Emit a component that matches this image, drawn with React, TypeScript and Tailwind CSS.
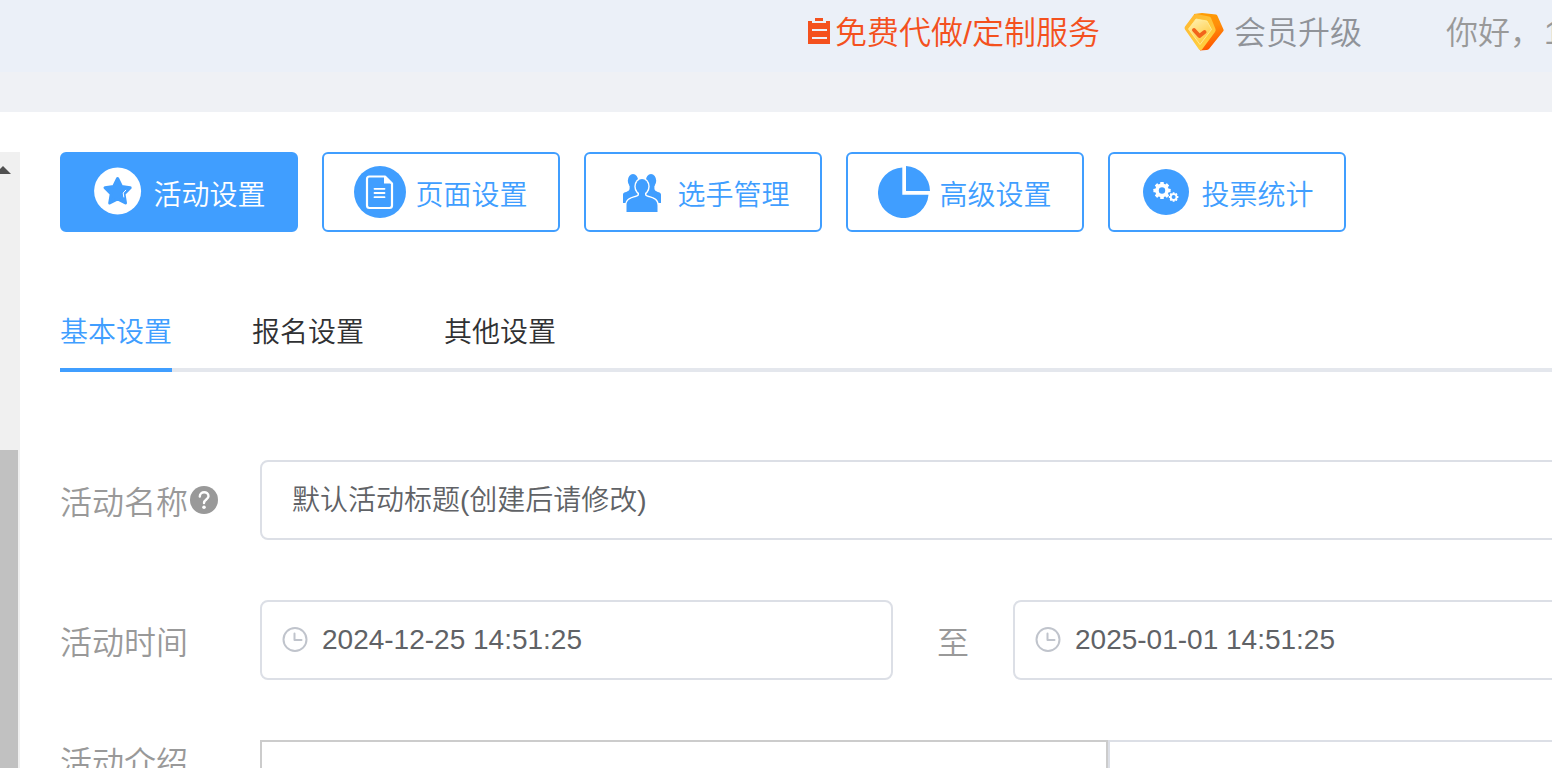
import type { ReactNode } from "react";

function ClipboardIcon() {
  return (
    <svg width="32" height="32" viewBox="0 0 32 32" fill="#f4511e" className="shrink-0">
      <path d="M5 5h4v2h14V5h4v23H5z" />
      <rect x="12" y="2" width="8" height="3" />
      <path d="M9 5h14v2H9zM9 13h15v2H9zM9 21h15v2H9z" fill="#ebf0f8" />
    </svg>
  );
}

function VipIcon() {
  return (
    <svg width="40" height="40" viewBox="0 0 40 40" className="relative -top-px shrink-0">
      <defs>
        <linearGradient id="vipSide" x1="0" y1="0" x2="0.3" y2="1">
          <stop offset="0" stopColor="#ffa000" />
          <stop offset="0.5" stopColor="#ff8f0a" />
          <stop offset="1" stopColor="#ff5a00" />
        </linearGradient>
        <linearGradient id="vipFace" x1="0" y1="0" x2="0.6" y2="1">
          <stop offset="0" stopColor="#ffb52e" />
          <stop offset="1" stopColor="#ffd040" />
        </linearGradient>
        <linearGradient id="vipInner" x1="0" y1="0" x2="0.5" y2="1">
          <stop offset="0" stopColor="#fff3b8" />
          <stop offset="1" stopColor="#ffc83a" />
        </linearGradient>
      </defs>
      <path d="M10 2 18 1 32 2.500Q33 2.700 33.500 4L39.500 17.500Q40 18.500 39 19.500L25 37Q24 38 22.500 38L16 38.500z" fill="url(#vipSide)" />
      <path d="M10 2.500Q11 1.700 12.500 2L25 4.500Q26.500 4.800 27 6L31.500 17Q32 18.500 31 20L18 37.500Q16.500 39 15 37.500L1 17.500Q0 16 1 14.500z" fill="url(#vipFace)" />
      <path d="M12 7 23 9 27.500 17.500 16 32.500 4.500 17z" fill="url(#vipInner)" stroke="#fff0a0" strokeWidth="0.8" strokeLinejoin="round" />
      <path d="M10 18 15.500 24 20.500 20" stroke="#f2641a" strokeWidth="4" strokeLinecap="round" strokeLinejoin="round" fill="none" />
    </svg>
  );
}

function StarIcon() {
  return (
    <svg width="52" height="52" viewBox="0 0 52 52">
      <circle cx="25.600" cy="25" r="23.500" fill="#fff" />
      <path
        d="M25.600 12.500 29.500 20.500 38.200 21.800 32 28 33.500 37 25.600 33 17.700 37 19.200 28 13 21.800 21.700 20.500z"
        fill="#409eff"
        stroke="#409eff"
        strokeWidth="3"
        strokeLinejoin="round"
      />
      <path d="M33.800 24.200 31.200 27 31.800 31" stroke="#fff" strokeWidth="1" strokeLinecap="round" fill="none" />
    </svg>
  );
}

function PageIcon() {
  return (
    <svg width="52" height="52" viewBox="0 0 52 52">
      <circle cx="26" cy="26" r="26" fill="#409eff" />
      <path
        d="M15.500 10.500H31L38 17.500V39.500Q38 42 35.500 42H15.500Q13 42 13 39.500V13Q13 10.500 15.500 10.500z"
        fill="none"
        stroke="#fff"
        strokeWidth="2.200"
        strokeLinejoin="round"
      />
      <path d="M30 10V17.500H38.500z" fill="#fff" />
      <path d="M20.500 22.800H30.500M20.500 27H30.500M20.500 31.200H30.500" stroke="#fff" strokeWidth="1.800" strokeLinecap="round" />
    </svg>
  );
}

function PeopleIcon() {
  return (
    <svg width="52" height="52" viewBox="0 0 52 52" fill="#409eff">
      {/* two people behind */}
      <ellipse cx="17" cy="14.800" rx="5.200" ry="6.800" />
      <path d="M13.600 19H22V37H7V28.500C7 25.500 13.600 26.500 13.600 22.500z" />
      <ellipse cx="35" cy="14.800" rx="5.200" ry="6.800" />
      <path d="M38.400 19H30V37H45V28.500C45 25.500 38.400 26.500 38.400 22.500z" />
      {/* person in front */}
      <g stroke="#fff" strokeWidth="2.800">
        <ellipse cx="26" cy="20.500" rx="6.300" ry="7.500" />
        <path d="M23 25V28.500C23 32.500 10.500 30 10.500 39.500V46H41.500V39.500C41.500 30 29 32.500 29 28.500V25z" />
      </g>
      <ellipse cx="26" cy="20.500" rx="6.300" ry="7.500" />
      <path d="M23 25V28.500C23 32.500 10.500 30 10.500 39.500V46H41.500V39.500C41.500 30 29 32.500 29 28.500V25z" />
    </svg>
  );
}

function PieIcon() {
  return (
    <svg width="52" height="52" viewBox="0 0 52 52" fill="#409eff">
      <path d="M24.300 1.500A25.300 25.300 0 1 0 50.500 28.800H24.300z" />
      <path d="M28 0A25 25 0 0 1 52 25H28z" />
    </svg>
  );
}

type GearProps = { cx: number; cy: number; r: number; hole: number; tooth: number };

function Gear({ cx, cy, r, hole, tooth }: GearProps) {
  return (
    <g transform={`translate(${cx} ${cy})`}>
      {[0, 45, 90, 135].map((angle) => (
        <rect
          key={angle}
          x={-tooth / 2}
          y={-r}
          width={tooth}
          height={r * 2}
          rx="0.6"
          fill="#fff"
          transform={`rotate(${angle})`}
        />
      ))}
      <circle r={r * 0.8} fill="#fff" />
      <circle r={hole} fill="#409eff" />
    </g>
  );
}

function GearsIcon() {
  return (
    <svg width="52" height="52" viewBox="0 0 52 52">
      <circle cx="26" cy="26" r="23" fill="#409eff" />
      <Gear cx={22} cy={24.5} r={8.6} hole={3.2} tooth={3.6} />
      <Gear cx={33.6} cy={31} r={4.8} hole={2} tooth={2} />
    </svg>
  );
}

function ClockIcon() {
  return (
    <svg width="26" height="26" viewBox="0 0 26 26" fill="none" stroke="#c0c4cc" strokeWidth="2" className="relative -top-px shrink-0">
      <circle cx="13" cy="13.500" r="11.500" />
      <path d="M12.500 7.500V14H19.500" strokeLinecap="round" strokeLinejoin="round" />
    </svg>
  );
}

function QuestionIcon() {
  return (
    <svg width="28" height="28" viewBox="0 0 28 28" className="relative -top-[3px] ml-0.5 shrink-0">
      <circle cx="14" cy="14" r="14" fill="#999" />
      <path d="M9.800 10.500C9.800 4.800 18.500 5 18.500 10.300C18.500 13.500 14 13.600 14 17" fill="none" stroke="#fff" strokeWidth="2.400" strokeLinecap="round" />
      <circle cx="14" cy="21.300" r="1.800" fill="#fff" />
    </svg>
  );
}

const menus: { label: string; icon: ReactNode }[] = [
  { label: "活动设置", icon: <StarIcon /> },
  { label: "页面设置", icon: <PageIcon /> },
  { label: "选手管理", icon: <PeopleIcon /> },
  { label: "高级设置", icon: <PieIcon /> },
  { label: "投票统计", icon: <GearsIcon /> },
];

const tabs = ["基本设置", "报名设置", "其他设置"];

function DateInput({ value }: { value: string }) {
  return (
    <div className="flex h-20 w-[633px] shrink-0 items-center gap-[14px] rounded-lg border-2 border-[#dcdfe6] pl-5 text-[28px] text-[#606266]">
      <ClockIcon />
      <span>{value}</span>
    </div>
  );
}

export default function App() {
  return (
    <div className="flex h-[768px] w-[1552px] flex-col overflow-hidden bg-white font-['Liberation_Sans','Noto_Sans_CJK_SC_DemiLight','Noto_Sans_CJK_SC',sans-serif] font-[350] whitespace-nowrap">
      {/* Top bar */}
      <header className="flex h-[72px] shrink-0 items-start bg-[#ebf0f8] pl-[803px] text-[32px] leading-[66px] text-[#999]">
        <div className="flex w-[381px] shrink-0 text-[#f4511e]">
          <span className="flex h-16 items-center">
            <ClipboardIcon />
          </span>
          <span>免费代做/定制服务</span>
        </div>
        <div className="flex w-[262px] shrink-0 items-center gap-[10px] text-[#909399]">
          <VipIcon />
          <span>会员升级</span>
        </div>
        <span className="shrink-0">你好，</span>
        <span className="ml-0.5 shrink-0">1</span>
      </header>
      <div className="h-10 shrink-0 bg-[#eff1f5]" />

      <div className="flex min-h-0 flex-1 pt-10">
        {/* Sidebar scrollbar */}
        <div className="flex w-5 shrink-0 flex-col bg-[#f0f0f0]">
          <svg width="20" height="298" viewBox="0 0 20 298" className="shrink-0">
            <path d="M-5 22 3 14 11 22z" fill="#505050" />
          </svg>
          <div className="w-[18px] flex-1 bg-[#c1c1c1]" />
        </div>

        <main className="flex w-[1532px] shrink-0 flex-col pl-10">
          <nav className="flex gap-6">
            {menus.map((menu, i) => (
              <button
                key={menu.label}
                className={`flex h-20 w-[238px] items-center gap-[9.5px] rounded-md border-2 border-[#409eff] pl-[30px] text-[28px] ${
                  i === 0 ? "bg-[#409eff] text-white" : "bg-white text-[#409eff]"
                }`}
              >
                {menu.icon}
                <span className="pt-2">{menu.label}</span>
              </button>
            ))}
          </nav>

          {/* Tabs */}
          <div className="mt-[60px] flex h-20 shrink-0 gap-20 text-[28px] leading-[82px] shadow-[inset_0_-4px_0_#e4e7ed]">
            {tabs.map((tab, i) => (
              <span key={tab} className={i === 0 ? "h-20 border-b-4 border-[#409eff] text-[#409eff]" : "text-[#303133]"}>
                {tab}
              </span>
            ))}
          </div>

          {/* Form */}
          <div className="mt-[88px] flex shrink-0 flex-col gap-[60px] text-[32px] leading-[80px] text-[#999]">
            <div className="flex h-20">
              <label className="flex w-[200px] shrink-0 items-center pt-1.5">
                活动名称
                <QuestionIcon />
              </label>
              <div className="h-20 w-[1400px] shrink-0 rounded-lg border-2 border-[#dcdfe6] pl-[30px] text-[28px] leading-[78px] text-[#606266]">
                默认活动标题(创建后请修改)
              </div>
            </div>
            <div className="flex h-20">
              <label className="flex w-[200px] shrink-0 items-center pt-1.5">活动时间</label>
              <DateInput value="2024-12-25 14:51:25" />
              <span className="flex w-[120px] shrink-0 items-center justify-center pt-1.5">至</span>
              <DateInput value="2025-01-01 14:51:25" />
            </div>
            <div className="flex h-20">
              <label className="w-[200px] shrink-0 leading-[47px]">活动介绍</label>
              <div className="w-[848px] shrink-0 border-2 border-[#ccc]" />
              <div className="w-[600px] shrink-0 border-2 border-[#dcdfe6]" />
            </div>
          </div>
        </main>
      </div>
    </div>
  );
}
